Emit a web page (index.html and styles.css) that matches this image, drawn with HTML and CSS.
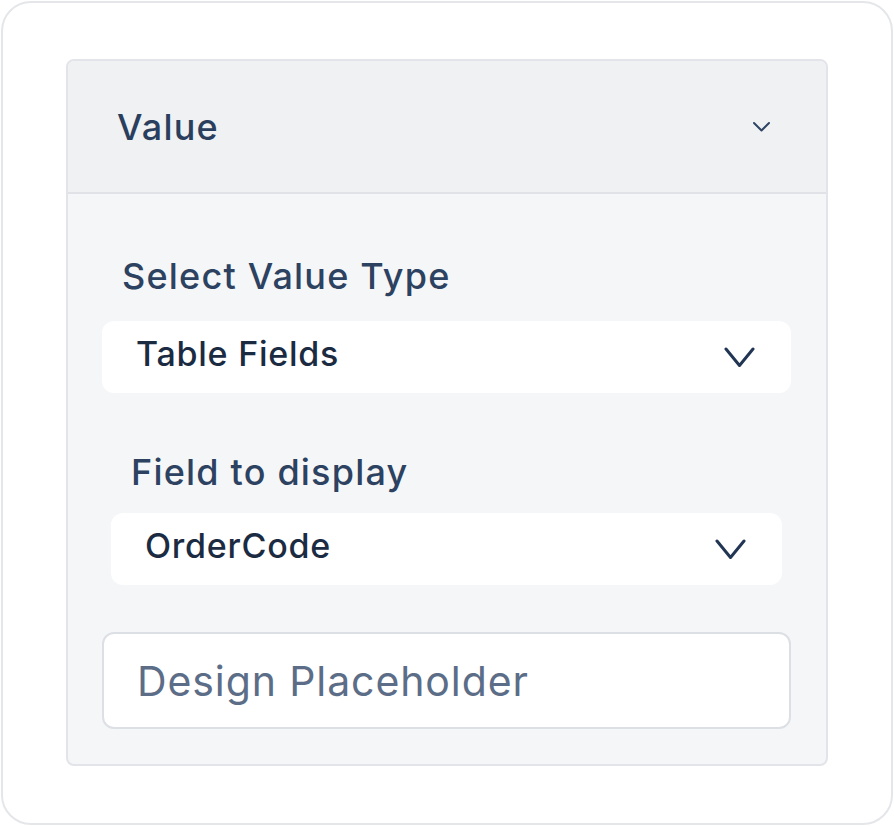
FILE: index.html
```html
<!DOCTYPE html>
<html>
<head>
<meta charset="utf-8">
<link rel="stylesheet" href="styles.css">
</head>
<body>
<div class="frame">
  <div class="panel">
    <div class="panel-header">
      <span class="panel-title">Value</span>
      <svg class="chev-sm" width="19" height="12" viewBox="0 0 19 12"><path d="M2 2 L9.5 9.5 L17 2" fill="none" stroke="#2f4563" stroke-width="2" stroke-linecap="round" stroke-linejoin="round"/></svg>
    </div>
    <div class="panel-body">
      <div class="group">
        <div class="label">Select Value Type</div>
        <div class="select">
          <span class="select-text">Table Fields</span>
          <svg class="chev" width="31" height="21" viewBox="0 0 31 21"><path d="M2 2 L15.5 18.5 L29 2" fill="none" stroke="#223654" stroke-width="3" stroke-linecap="round" stroke-linejoin="round"/></svg>
        </div>
      </div>
      <div class="group group-inset">
        <div class="label">Field to display</div>
        <div class="select">
          <span class="select-text">OrderCode</span>
          <svg class="chev" width="31" height="21" viewBox="0 0 31 21"><path d="M2 2 L15.5 18.5 L29 2" fill="none" stroke="#223654" stroke-width="3" stroke-linecap="round" stroke-linejoin="round"/></svg>
        </div>
      </div>
      <div class="input">
        <span class="placeholder">Design Placeholder</span>
      </div>
    </div>
  </div>
</div>
</body>
</html>
```

FILE: styles.css
```css
* { box-sizing: border-box; }
html, body {
  margin: 0;
  padding: 0;
  background: #ffffff;
  font-family: Inter, "Noto Sans", sans-serif;
}
.frame {
  margin: 1px;
  width: 892px;
  height: 824px;
  border: 2px solid #e4e6e9;
  border-radius: 30px;
  padding: 56px 0 0 63px;
  background: #ffffff;
}
.panel {
  width: 762px;
  height: 707px;
  border: 2px solid #e2e4e9;
  border-radius: 8px;
  overflow: hidden;
  background: #f5f6f8;
  display: flex;
  flex-direction: column;
}
.panel-header {
  height: 133px;
  background: #f0f1f3;
  border-bottom: 2px solid #e0e2e7;
  display: flex;
  align-items: center;
  justify-content: space-between;
  padding: 0 55px 0 49px;
}
.panel-title {
  font-size: 36px;
  font-weight: 500;
  color: #2a3f5d;
  letter-spacing: 1.2px;
  line-height: 44px;
}
.chev-sm { display: block; }
.panel-body {
  flex: 1;
  padding: 60px 35px 35px 34px;
  display: flex;
  flex-direction: column;
}
.group {
  display: flex;
  flex-direction: column;
  gap: 23px;
}
.group-inset {
  margin: 57px 9px 0 9px;
  gap: 19px;
}
.label {
  margin-left: 20px;
  font-size: 36px;
  font-weight: 500;
  line-height: 44px;
  color: #2c4260;
  letter-spacing: 1.2px;
}
.select {
  height: 72px;
  background: #ffffff;
  border-radius: 12px;
  display: flex;
  align-items: center;
  justify-content: space-between;
  padding: 0 36px 6px 34px;
}
.select-text {
  font-size: 34px;
  font-weight: 500;
  line-height: 44px;
  color: #1b2b42;
  letter-spacing: 0.75px;
}
.chev { display: block; margin-top: 6px; }
.input {
  margin-top: 47px;
  height: 97px;
  background: #ffffff;
  border: 2px solid #dcdfe4;
  border-radius: 12px;
  display: flex;
  align-items: center;
  padding: 0 0 0 33px;
}
.placeholder {
  font-size: 41px;
  font-weight: 400;
  line-height: 48px;
  color: #5c6d87;
  letter-spacing: 0.9px;
}
```
